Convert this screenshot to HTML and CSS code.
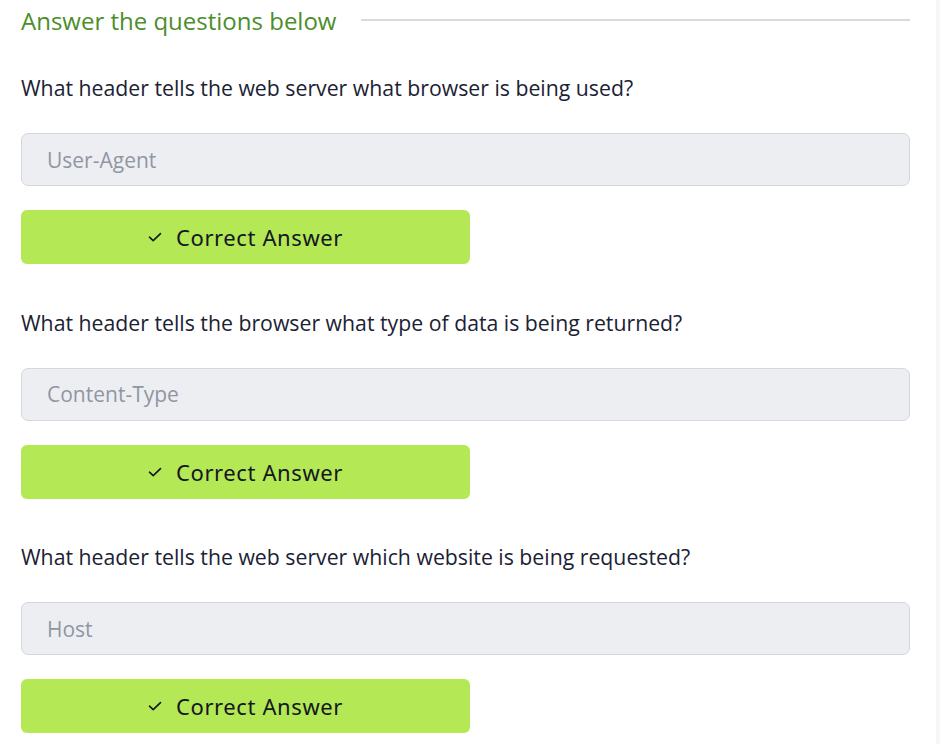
FILE: index.html
```html
<!DOCTYPE html>
<html lang="en">
<head>
<meta charset="utf-8">
<title>Answer the questions below</title>
<link rel="stylesheet" href="styles.css">
</head>
<body>
<div class="page">
  <main class="content">
    <div class="section-head">
      <h2 class="section-title">Answer the questions below</h2>
      <span class="section-rule"></span>
    </div>

    <div class="question">
      <p class="question-text">What header tells the web server what browser is being used?</p>
      <input class="answer-input" type="text" placeholder="User-Agent" disabled>
      <button class="answer-btn" type="button"><svg class="check" viewBox="0 0 14 14" width="14" height="14"><path d="M1.5 7.2 L5.2 10.6 L12.5 3.6" fill="none" stroke="currentColor" stroke-width="1.6" stroke-linecap="round" stroke-linejoin="round"/></svg>Correct Answer</button>
    </div>

    <div class="question">
      <p class="question-text">What header tells the browser what type of data is being returned?</p>
      <input class="answer-input" type="text" placeholder="Content-Type" disabled>
      <button class="answer-btn" type="button"><svg class="check" viewBox="0 0 14 14" width="14" height="14"><path d="M1.5 7.2 L5.2 10.6 L12.5 3.6" fill="none" stroke="currentColor" stroke-width="1.6" stroke-linecap="round" stroke-linejoin="round"/></svg>Correct Answer</button>
    </div>

    <div class="question">
      <p class="question-text">What header tells the web server which website is being requested?</p>
      <input class="answer-input" type="text" placeholder="Host" disabled>
      <button class="answer-btn" type="button"><svg class="check" viewBox="0 0 14 14" width="14" height="14"><path d="M1.5 7.2 L5.2 10.6 L12.5 3.6" fill="none" stroke="currentColor" stroke-width="1.6" stroke-linecap="round" stroke-linejoin="round"/></svg>Correct Answer</button>
    </div>
  </main>
  <aside class="edge"></aside>
</div>
</body>
</html>
```

FILE: styles.css
```css
html, body {
  margin: 0;
  padding: 0;
  background: #ffffff;
}

body {
  font-family: "Open Sans", Lato, "Liberation Sans", sans-serif;
  color: #1c2233;
  overflow: hidden;
}

.page {
  display: flex;
  width: 940px;
  min-height: 744px;
}

.content {
  flex: 1;
  padding: 0 26px 0 21px;
}

.edge {
  width: 4px;
  background: #f6f6f7;
}

.section-head {
  display: flex;
  align-items: center;
  gap: 25px;
  height: 40px;
  margin-top: 1px;
}

.section-title {
  margin: 0;
  font-size: 24px;
  font-weight: 400;
  line-height: 40px;
  color: #4b8e2b;
  white-space: nowrap;
}

.section-rule {
  flex: 1;
  height: 2px;
  background: #d6d9de;
  margin-top: -2px;
}

.question {
  display: flex;
  flex-direction: column;
  align-items: flex-start;
}

.question-text {
  margin: 32px 0 0;
  font-size: 21.25px;
  line-height: 30px;
  color: #1c2233;
}

.question + .question .question-text {
  margin-top: 43.5px;
}

.answer-input {
  box-sizing: border-box;
  width: 100%;
  height: 53px;
  margin-top: 30px;
  padding: 0 25px;
  background: #edeef2;
  border: 1px solid #d4d7dd;
  border-radius: 7px;
  font-family: inherit;
  font-size: 21px;
  color: #9096a3;
  outline: none;
}

.answer-input::placeholder {
  color: #9096a3;
  opacity: 1;
}

.answer-btn {
  display: flex;
  align-items: center;
  justify-content: center;
  gap: 14px;
  width: 449px;
  height: 54px;
  margin-top: 24px;
  padding: 0;
  border: none;
  border-radius: 6px;
  background: #b4e854;
  font-family: "Noto Sans", "Open Sans", sans-serif;
  font-size: 22px;
  letter-spacing: 0.6px;
  color: #131722;
  cursor: pointer;
}

.check {
  flex: none;
  color: #131722;
}
```
